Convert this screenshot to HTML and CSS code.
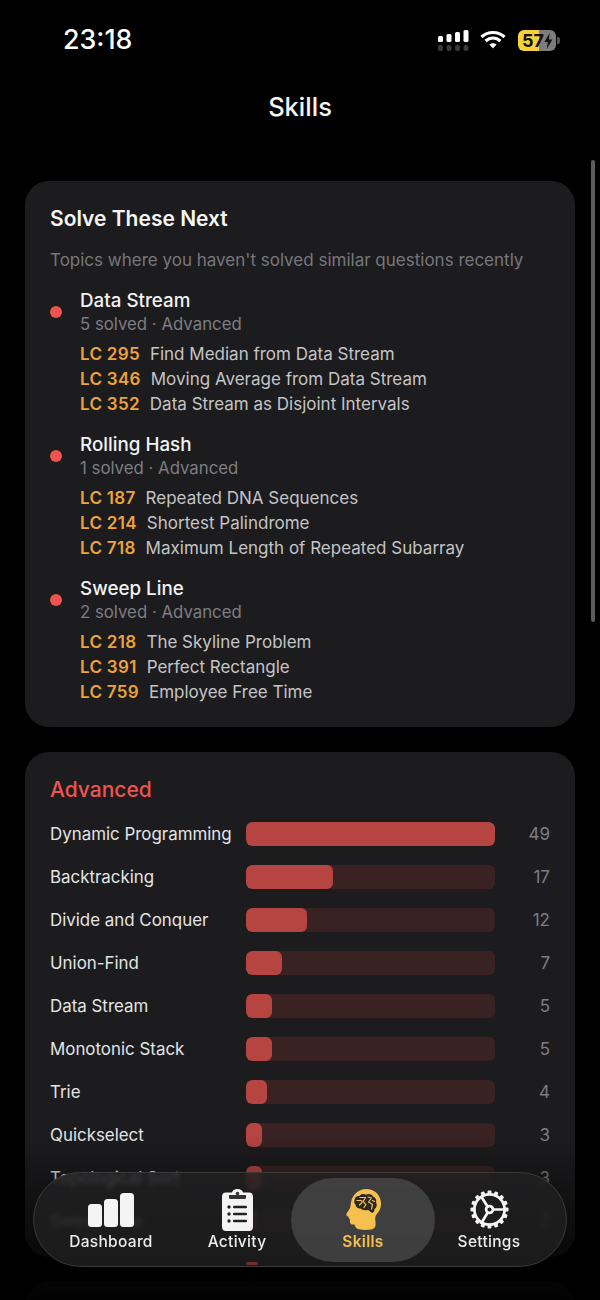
FILE: index.html
```html
<!DOCTYPE html>
<html lang="en">
<head>
  <title>Skills</title>
  <link rel="stylesheet" href="styles.css">
</head>
<body>
  <div class="phone">
    <div class="status-bar">
      <span class="time">23:18</span>
      <div class="status-icons">
        <svg class="signal" width="31" height="22" viewBox="0 0 31 22">
          <g fill="#fff">
            <rect x="0" y="6" width="5" height="6" rx="1.5"/>
            <rect x="8.5" y="4" width="5" height="8" rx="1.5"/>
            <rect x="17" y="2" width="5" height="10" rx="1.5"/>
            <rect x="25.5" y="0" width="5" height="12" rx="1.5"/>
          </g>
          <g fill="#3a3a3a">
            <rect x="0" y="15" width="5" height="6" rx="2"/>
            <rect x="8.5" y="15" width="5" height="6" rx="2"/>
            <rect x="17" y="15" width="5" height="6" rx="2"/>
            <rect x="25.5" y="15" width="5" height="6" rx="2"/>
          </g>
        </svg>
        <svg class="wifi" width="26" height="20" viewBox="0 0 26 20">
          <g fill="none" stroke="#fff" stroke-width="3.2">
            <path d="M1.5 7 C8 1 18 1 24.5 7"/>
            <path d="M5.6 11 C10 7 16 7 20.4 11"/>
          </g>
          <path d="M9.4 14.6 C11.5 12.9 14.5 12.9 16.6 14.6 L13 18.6 Z" fill="#fff"/>
        </svg>
        <div class="battery">
          <div class="battery-body">
            <span class="battery-num">57</span>
            <svg class="bolt" width="9" height="16" viewBox="0 0 9 16"><path d="M5.6 0 L0.4 9 H3.8 L2.8 16 L8.4 6.4 H4.9 Z" fill="#111"/></svg>
          </div>
          <div class="battery-tip"></div>
        </div>
      </div>
    </div>

    <h1 class="page-title">Skills</h1>

    <div class="content">
      <section class="card next-card">
        <h2 class="card-title">Solve These Next</h2>
        <p class="card-sub">Topics where you haven't solved similar questions recently</p>

        <div class="topic">
          <div class="topic-head">
            <span class="dot"></span>
            <div>
              <div class="topic-name">Data Stream</div>
              <div class="topic-meta">5 solved · Advanced</div>
            </div>
          </div>
          <ul class="problems">
            <li><b>LC 295</b>Find Median from Data Stream</li>
            <li><b>LC 346</b>Moving Average from Data Stream</li>
            <li><b>LC 352</b>Data Stream as Disjoint Intervals</li>
          </ul>
        </div>

        <div class="topic">
          <div class="topic-head">
            <span class="dot"></span>
            <div>
              <div class="topic-name">Rolling Hash</div>
              <div class="topic-meta">1 solved · Advanced</div>
            </div>
          </div>
          <ul class="problems">
            <li><b>LC 187</b>Repeated DNA Sequences</li>
            <li><b>LC 214</b>Shortest Palindrome</li>
            <li><b>LC 718</b>Maximum Length of Repeated Subarray</li>
          </ul>
        </div>

        <div class="topic">
          <div class="topic-head">
            <span class="dot"></span>
            <div>
              <div class="topic-name">Sweep Line</div>
              <div class="topic-meta">2 solved · Advanced</div>
            </div>
          </div>
          <ul class="problems">
            <li><b>LC 218</b>The Skyline Problem</li>
            <li><b>LC 391</b>Perfect Rectangle</li>
            <li><b>LC 759</b>Employee Free Time</li>
          </ul>
        </div>
      </section>

      <section class="card level-card">
        <h2 class="card-title level-title">Advanced</h2>
        <div class="skill-row"><span class="skill-name">Dynamic Programming</span><div class="track"><div class="fill" style="width:100%"></div></div><span class="skill-count">49</span></div>
        <div class="skill-row"><span class="skill-name">Backtracking</span><div class="track"><div class="fill" style="width:34.9%"></div></div><span class="skill-count">17</span></div>
        <div class="skill-row"><span class="skill-name">Divide and Conquer</span><div class="track"><div class="fill" style="width:24.5%"></div></div><span class="skill-count">12</span></div>
        <div class="skill-row"><span class="skill-name">Union-Find</span><div class="track"><div class="fill" style="width:14.3%"></div></div><span class="skill-count">7</span></div>
        <div class="skill-row"><span class="skill-name">Data Stream</span><div class="track"><div class="fill" style="width:10.4%"></div></div><span class="skill-count">5</span></div>
        <div class="skill-row"><span class="skill-name">Monotonic Stack</span><div class="track"><div class="fill" style="width:10.4%"></div></div><span class="skill-count">5</span></div>
        <div class="skill-row"><span class="skill-name">Trie</span><div class="track"><div class="fill" style="width:8.4%"></div></div><span class="skill-count">4</span></div>
        <div class="skill-row"><span class="skill-name">Quickselect</span><div class="track"><div class="fill" style="width:6.3%"></div></div><span class="skill-count">3</span></div>
        <div class="skill-row"><span class="skill-name">Topological Sort</span><div class="track"><div class="fill" style="width:6.3%"></div></div><span class="skill-count">3</span></div>
        <div class="skill-row"><span class="skill-name">Sweep Line</span><div class="track"><div class="fill" style="width:4.1%"></div></div><span class="skill-count">2</span></div>
      </section>

      <section class="card last-card"></section>
    </div>

    <div class="scrollbar"></div>
    <div class="bottom-fade"></div>

    <nav class="tabbar">
      <a class="tab">
        <div class="tab-icon">
          <svg width="46" height="34" viewBox="0 0 46 34"><g fill="#f4f4f4"><rect x="0" y="11" width="14" height="23" rx="3.5"/><rect x="16" y="6" width="14" height="28" rx="3.5"/><rect x="32" y="0" width="14" height="34" rx="3.5"/></g></svg>
        </div>
        <span>Dashboard</span>
      </a>
      <a class="tab">
        <div class="tab-icon">
          <svg width="31" height="42" viewBox="0 0 31 42">
            <path d="M4 3.500 H10 C10.500 1.500 12.500 0 15.500 0 C18.500 0 20.500 1.500 21 3.500 H27 C29.500 3.500 31 5 31 7.500 V38 C31 40.500 29.500 42 27 42 H4 C1.500 42 0 40.500 0 38 V7.500 C0 5 1.500 3.500 4 3.500 Z" fill="#f4f4f4"/>
            <path d="M7 6 H24 V8.500 C24 9.500 23.400 10 22.500 10 H8.500 C7.600 10 7 9.500 7 8.500 Z" fill="#333"/>
            <circle cx="15.500" cy="4.500" r="1.800" fill="#333"/>
            <g fill="#222">
              <circle cx="7" cy="18" r="1.700"/><rect x="11" y="16.800" width="14" height="2.400" rx="1"/>
              <circle cx="7" cy="25" r="1.700"/><rect x="11" y="23.800" width="14" height="2.400" rx="1"/>
              <circle cx="7" cy="32" r="1.700"/><rect x="11" y="30.800" width="14" height="2.400" rx="1"/>
            </g>
          </svg>
        </div>
        <span>Activity</span>
      </a>
      <a class="tab active">
        <div class="tab-icon">
          <svg width="35" height="41" viewBox="0 0 35 41">
            <path d="M20 0 C28.500 0 35 6 35 14.500 C35 20 32.500 23 30.500 25.500 C29 27.500 29 30 29.500 33 C30 37 29 40 25 40.500 C20 41.200 14 41 11.500 39.800 C9.500 38.800 9 37 8.500 35.500 C6.500 35.700 4.500 35.500 4 33.500 C3.700 32 4 31 3.800 30 C3 29.500 2.300 28.800 2.800 27.800 C1.500 27.300 0 26.800 0.300 25.300 C0.700 23.500 3 21.500 4 19 C4.800 17 4.500 15 5.300 12 C7 5 13 0 20 0 Z" fill="#f6c04e"/>
            <path d="M8.500 11 C9 8 11 6.500 13.500 7 C15 4.800 18 4.500 20 5.800 C22.500 4.500 25.500 5 27 7.500 C29.500 8.500 31 11 30 13.500 C31.500 16 30.500 19 28.500 20 C28.500 22.500 27 24.500 25.500 23.500 C23.500 22.500 23 20.500 21 21 C18.500 21.500 16 21 14.500 19.500 C12 19.500 9.500 18 9.500 15.500 C8 14.500 8 12.500 8.500 11 Z" fill="#2b2725"/>
            <g fill="none" stroke="#f6c04e" stroke-width="1.200" stroke-linecap="round" stroke-linejoin="round">
              <path d="M11 11.500 H15 C16 11.500 16.500 12.500 16 13.500 L13.500 16"/>
              <path d="M14 8.500 H19.500 L17.500 12 C17.500 14 19 14.500 20 15.500 L18 18.500"/>
              <path d="M22 8 L25.500 9 L22.500 13 L26.500 15.500 L25.500 20"/>
              <path d="M26.500 11.500 L28.500 12.500"/>
            </g>
          </svg>
        </div>
        <span>Skills</span>
      </a>
      <a class="tab">
        <div class="tab-icon">
          <svg width="39" height="39" viewBox="0 0 40 40">
            <g fill="#f4f4f4">
              <rect x="18" y="0.500" width="4" height="5" rx="1"/>
              <rect x="18" y="0.500" width="4" height="5" rx="1" transform="rotate(22.500 20 20)"/>
              <rect x="18" y="0.500" width="4" height="5" rx="1" transform="rotate(45 20 20)"/>
              <rect x="18" y="0.500" width="4" height="5" rx="1" transform="rotate(67.500 20 20)"/>
              <rect x="18" y="0.500" width="4" height="5" rx="1" transform="rotate(90 20 20)"/>
              <rect x="18" y="0.500" width="4" height="5" rx="1" transform="rotate(112.500 20 20)"/>
              <rect x="18" y="0.500" width="4" height="5" rx="1" transform="rotate(135 20 20)"/>
              <rect x="18" y="0.500" width="4" height="5" rx="1" transform="rotate(157.500 20 20)"/>
              <rect x="18" y="0.500" width="4" height="5" rx="1" transform="rotate(180 20 20)"/>
              <rect x="18" y="0.500" width="4" height="5" rx="1" transform="rotate(202.500 20 20)"/>
              <rect x="18" y="0.500" width="4" height="5" rx="1" transform="rotate(225 20 20)"/>
              <rect x="18" y="0.500" width="4" height="5" rx="1" transform="rotate(247.500 20 20)"/>
              <rect x="18" y="0.500" width="4" height="5" rx="1" transform="rotate(270 20 20)"/>
              <rect x="18" y="0.500" width="4" height="5" rx="1" transform="rotate(292.500 20 20)"/>
              <rect x="18" y="0.500" width="4" height="5" rx="1" transform="rotate(315 20 20)"/>
              <rect x="18" y="0.500" width="4" height="5" rx="1" transform="rotate(337.500 20 20)"/>
            </g>
            <g fill="none" stroke="#f4f4f4" stroke-width="2.800">
              <circle cx="20" cy="20" r="15.500"/>
              <circle cx="20" cy="20" r="3.500"/>
              <path d="M18 17 L11 6 M23.500 20 H36 M18.200 23 L11 35"/>
            </g>
          </svg>
        </div>
        <span>Settings</span>
      </a>
      <div class="glass-glint"></div>
    </nav>
  </div>
</body>
</html>
```

FILE: styles.css
```css
*{
  padding: 0;
  margin: 0;
  box-sizing: border-box;
}
body{
  background: #000;
  font-family: Inter, "Liberation Sans", sans-serif;
  color: #fff;
}
.phone{
  position: relative;
  width: 600px;
  height: 1300px;
  overflow: hidden;
  background: #000;
}
.status-bar{
  height: 92px;
  padding: 22px 40px 0 63px;
  display: flex;
  justify-content: space-between;
  align-items: flex-start;
}
.time{
  font-size: 26.8px;
  line-height: 34px;
  font-weight: 500;
}
.status-icons{
  display: flex;
  align-items: flex-start;
  gap: 11px;
  padding-top: 7px;
}
.signal{
  margin-top: 1px;
}
.wifi{
  margin-top: 1px;
}
.battery{
  display: flex;
  align-items: center;
  height: 22px;
  margin-left: 1px;
}
.battery-body{
  position: relative;
  width: 38px;
  height: 21px;
  border-radius: 6px;
  background: linear-gradient(90deg, #f7d13c 0 56%, #7d7d7d 56% 100%);
  overflow: hidden;
}
.battery-num{
  position: absolute;
  left: 4px;
  top: 0;
  font-size: 18px;
  line-height: 21px;
  font-weight: 700;
  color: #111;
}
.bolt{
  position: absolute;
  right: 3px;
  top: 3px;
}
.battery-tip{
  width: 3px;
  height: 7px;
  margin-left: 1px;
  border-radius: 0 2px 2px 0;
  background: #555;
}
.page-title{
  text-align: center;
  font-size: 25.5px;
  line-height: 30px;
  font-weight: 500;
  color: #f5f5f5;
  margin-bottom: 59px;
}
.content{
  padding: 0 25px;
  display: flex;
  flex-direction: column;
  gap: 25px;
}
.card{
  background: #1c1c1e;
  border-radius: 24px;
  padding: 25px 25px;
}
.card-title{
  font-size: 21px;
  line-height: 26px;
  font-weight: 600;
  color: #f5f5f5;
}
.card-sub{
  margin-top: 17px;
  font-size: 17px;
  line-height: 22px;
  color: #77777b;
}
.next-card{
  height: 546px;
}
.topic{
  margin-top: 18px;
}
.topic + .topic{
  margin-top: 16px;
}
.topic-head{
  display: flex;
  align-items: center;
  gap: 18px;
}
.dot{
  width: 12px;
  height: 12px;
  margin-bottom: 2px;
  border-radius: 50%;
  background: #ef5350;
  flex: none;
}
.topic-name{
  font-size: 18.8px;
  line-height: 24px;
  font-weight: 500;
  color: #f2f2f2;
}
.topic-meta{
  font-size: 16.8px;
  line-height: 23px;
  color: #7d7d82;
}
.problems{
  list-style: none;
  margin-top: 6px;
  padding-left: 30px;
}
.problems li{
  font-size: 17px;
  line-height: 25px;
  color: #c4c4c6;
  white-space: nowrap;
}
.problems b{
  font-weight: 600;
  letter-spacing: 0.3px;
  color: #eda23c;
  margin-right: 10px;
}
.level-card{
  height: 505px;
}
.level-title{
  color: #ef5350;
  font-weight: 500;
  margin-bottom: 9px;
}
.skill-row{
  display: grid;
  grid-template-columns: 196px 249px 1fr;
  align-items: center;
  height: 43px;
}
.skill-name{
  font-size: 16.9px;
  color: #e4e4e6;
  white-space: nowrap;
}
.track{
  height: 24px;
  border-radius: 6px;
  background: #3a2223;
  overflow: hidden;
}
.fill{
  height: 100%;
  border-radius: 6px;
  background: #b64441;
}
.skill-count{
  text-align: right;
  font-size: 17px;
  color: #7e7e82;
}
.last-card{
  height: 200px;
}
.scrollbar{
  position: absolute;
  left: 591px;
  top: 160px;
  width: 4px;
  height: 462px;
  border-radius: 2px;
  background: #5c5c5c;
}
.bottom-fade{
  position: absolute;
  left: 0;
  right: 0;
  bottom: 0;
  height: 165px;
  background: linear-gradient(180deg, rgba(0,0,0,0) 0%, rgba(0,0,0,0.45) 45%, rgba(0,0,0,0.92) 100%);
}
.tabbar{
  position: absolute;
  left: 33px;
  top: 1172px;
  width: 534px;
  height: 95px;
  padding: 4.5px 0;
  border-radius: 48px;
  display: grid;
  grid-template-columns: repeat(4, 126px);
  justify-content: center;
  background: rgba(33,33,34,0.8);
  backdrop-filter: blur(2px);
  border: 1.5px solid #3a3a3b;
}
.tab{
  display: flex;
  flex-direction: column;
  align-items: center;
  justify-content: flex-end;
  padding-bottom: 10px;
  border-radius: 42px;
  font-size: 15.5px;
  line-height: 20px;
  font-weight: 500;
  letter-spacing: 0.3px;
  color: #ececec;
}
.tab-icon{
  height: 44px;
  display: flex;
  align-items: center;
  justify-content: center;
}
.tab.active{
  margin: 0 -9px;
  background: rgba(85,85,85,0.62);
  color: #f6c04e;
  font-weight: 600;
}
.glass-glint{
  position: absolute;
  left: 212px;
  bottom: 1px;
  width: 12px;
  height: 3px;
  border-radius: 2px;
  background: rgba(170,60,58,0.6);
}
```
